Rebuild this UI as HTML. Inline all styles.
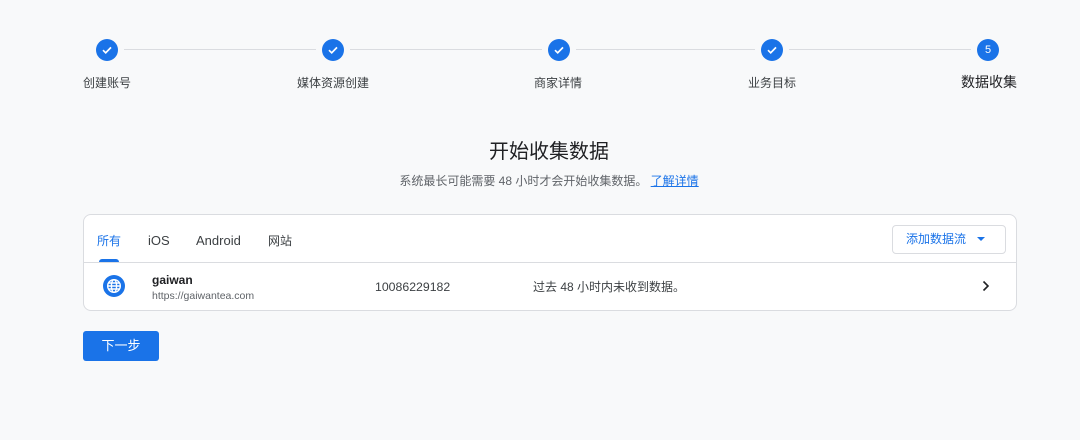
<!DOCTYPE html><html><head><meta charset="utf-8"><style>
body{margin:0;width:1080px;height:440px;background:#f8f9fa;font-family:"Liberation Sans","Noto Sans CJK SC",sans-serif;position:relative;overflow:hidden;color:#3c4043;line-height:1.2}
.a{position:absolute;line-height:16px}
.c{width:22px;height:22px;border-radius:50%;background:#1a73e8;top:39px;display:flex;align-items:center;justify-content:center;color:#fff;font-size:11px}
.l{top:75px;font-size:12px;color:#3c4043;transform:translateX(-50%);white-space:nowrap}
.line{top:49px;height:1px;background:#dadce0}
</style></head><body>
<div class="a line" style="left:124px;width:192px"></div>
<div class="a line" style="left:350px;width:192px"></div>
<div class="a line" style="left:576px;width:179px"></div>
<div class="a line" style="left:789px;width:182px"></div>
<div class="a c" style="left:96px"><svg width="14" height="14" viewBox="0 0 14 14"><path d="M3 7.2l2.7 2.6 5.3-5.4" stroke="#fff" stroke-width="1.7" fill="none"/></svg></div>
<div class="a c" style="left:322px"><svg width="14" height="14" viewBox="0 0 14 14"><path d="M3 7.2l2.7 2.6 5.3-5.4" stroke="#fff" stroke-width="1.7" fill="none"/></svg></div>
<div class="a c" style="left:548px"><svg width="14" height="14" viewBox="0 0 14 14"><path d="M3 7.2l2.7 2.6 5.3-5.4" stroke="#fff" stroke-width="1.7" fill="none"/></svg></div>
<div class="a c" style="left:761px"><svg width="14" height="14" viewBox="0 0 14 14"><path d="M3 7.2l2.7 2.6 5.3-5.4" stroke="#fff" stroke-width="1.7" fill="none"/></svg></div>
<div class="a c" style="left:977px">5</div>
<div class="a l" style="left:107px">创建账号</div>
<div class="a l" style="left:333px">媒体资源创建</div>
<div class="a l" style="left:558px">商家详情</div>
<div class="a l" style="left:772px">业务目标</div>
<div class="a l" style="left:989px;top:74px;font-size:14px;color:#202124">数据收集</div>
<div class="a" style="left:9px;width:1080px;top:140px;line-height:24px;text-align:center;font-size:20px;color:#202124">开始收集数据</div>
<div class="a" style="left:9px;width:1080px;top:173px;text-align:center;font-size:12px;color:#5f6368">系统最长可能需要 48 小时才会开始收集数据。 <span style="color:#1a73e8;text-decoration:underline">了解详情</span></div>
<div class="a" style="left:83px;top:214px;width:932px;height:95px;background:#fff;border:1px solid #dadce0;border-radius:8px"></div>
<div class="a" style="left:84px;top:262px;width:932px;height:1px;background:#dadce0"></div>
<div class="a" style="left:97px;top:233px;font-size:12px;color:#1a73e8">所有</div>
<div class="a" style="left:99px;top:259px;width:20px;height:3px;background:#1a73e8;border-radius:3px 3px 0 0"></div>
<div class="a" style="left:148px;top:233px;font-size:13px">iOS</div>
<div class="a" style="left:196px;top:233px;font-size:13px">Android</div>
<div class="a" style="left:268px;top:233px;font-size:12px">网站</div>
<div class="a" style="left:892px;top:225px;width:112px;height:27px;border:1px solid #dadce0;border-radius:4px;background:#fff"></div>
<div class="a" style="left:906px;top:231px;font-size:12px;color:#1a73e8">添加数据流</div>
<div class="a" style="left:977px;top:237px;width:0;height:0;border-left:4px solid transparent;border-right:4px solid transparent;border-top:4px solid #1a73e8"></div>
<div class="a" style="left:103px;top:275px;width:22px;height:22px;border-radius:50%;background:#1a73e8"><svg width="22" height="22" viewBox="0 0 22 22"><g stroke="#fff" stroke-width="1.4" fill="none"><circle cx="11" cy="11" r="6.3"/><ellipse cx="11" cy="11" rx="2.6" ry="6.3"/><path d="M4.7 11h12.6M5.6 8h10.8M5.6 14h10.8"/></g></svg></div>
<div class="a" style="left:152px;top:272px;font-size:12px;font-weight:bold;color:#202124">gaiwan</div>
<div class="a" style="left:152px;top:288px;font-size:10.5px;color:#5f6368">https://gaiwantea.com</div>
<div class="a" style="left:375px;top:279px;font-size:12.3px">10086229182</div>
<div class="a" style="left:533px;top:279px;font-size:12px">过去 48 小时内未收到数据。</div>
<svg class="a" style="left:980px;top:280px" width="12" height="12" viewBox="0 0 12 12"><path d="M3.5 1.5l4.5 4.5-4.5 4.5" stroke="#202124" stroke-width="1.6" fill="none"/></svg>
<div class="a" style="left:83px;top:331px;width:76px;height:30px;background:#1a73e8;border-radius:3px;color:#fff;font-size:13px;text-align:center;line-height:30px">下一步</div>
</body></html>
